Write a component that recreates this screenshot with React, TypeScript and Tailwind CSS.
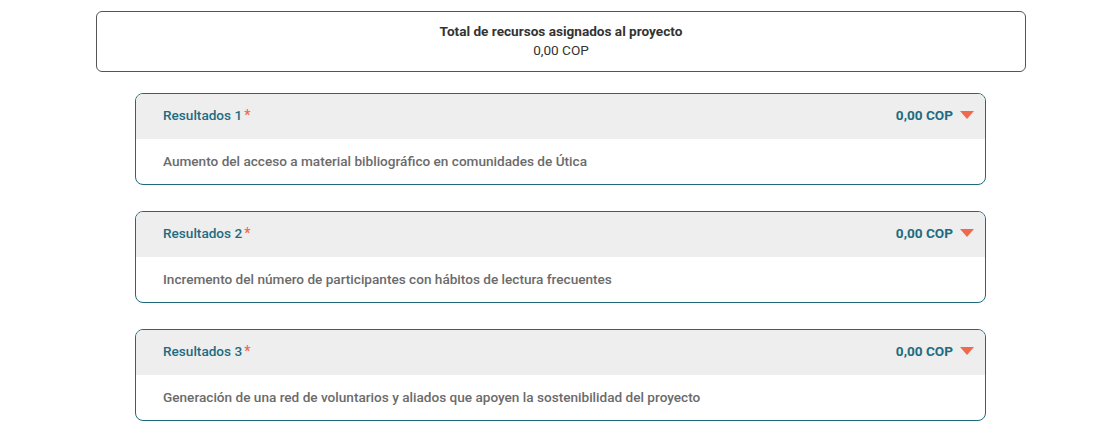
const RESULTS = [
  'Aumento del acceso a material bibliográfico en comunidades de Útica',
  'Incremento del número de participantes con hábitos de lectura frecuentes',
  'Generación de una red de voluntarios y aliados que apoyen la sostenibilidad del proyecto',
]

function ResultCard({ index, text }: { index: number; text: string }) {
  return (
    <div className="ml-[135px] w-[851px] h-[92px] border border-[#1e6a7c] rounded-[8px] overflow-hidden bg-white">
      {/* Header */}
      <div className="h-[45px] bg-[#eeeeee] flex items-center justify-between pl-[27px] pr-[11px] pb-[3px]">
        <div className="text-[13.6px] font-medium text-[#1f6b80] leading-[18px]">
          Resultados {index}
          <span className="text-[#ef6a4c] text-[14px] ml-[2px]">*</span>
        </div>
        <div className="flex items-center gap-[7px]">
          <span className="text-[13.6px] font-bold text-[#1f6b80]">0,00 COP</span>
          <svg width="14" height="8" viewBox="0 0 14 8">
            <path d="M0 0 L14 0 L7 8 Z" fill="#ef6a4c" />
          </svg>
        </div>
      </div>
      {/* Body */}
      <div className="h-[45px] flex items-center pl-[27px] pb-[1px] text-[13.6px] font-medium text-[#6b6b6b]">
        {text}
      </div>
    </div>
  )
}

export default function App() {
  return (
    <div className="w-[1110px] h-[429px] bg-white pt-[11px]" style={{ fontFamily: 'Roboto, "Liberation Sans", sans-serif' }}>
      <div className="ml-[96px] w-[930px] h-[61px] border border-[#555555] rounded-[6px] flex flex-col items-center justify-center pb-[1px]">
        <div className="text-[13.6px] font-bold text-[#333333] leading-[19px]">Total de recursos asignados al proyecto</div>
        <div className="text-[13.6px] text-[#333333] leading-[19px]">0,00 COP</div>
      </div>
      <div className="mt-[21px] flex flex-col gap-[26px]">
        {RESULTS.map((r, i) => (
          <ResultCard key={i} index={i + 1} text={r} />
        ))}
      </div>
    </div>
  )
}
